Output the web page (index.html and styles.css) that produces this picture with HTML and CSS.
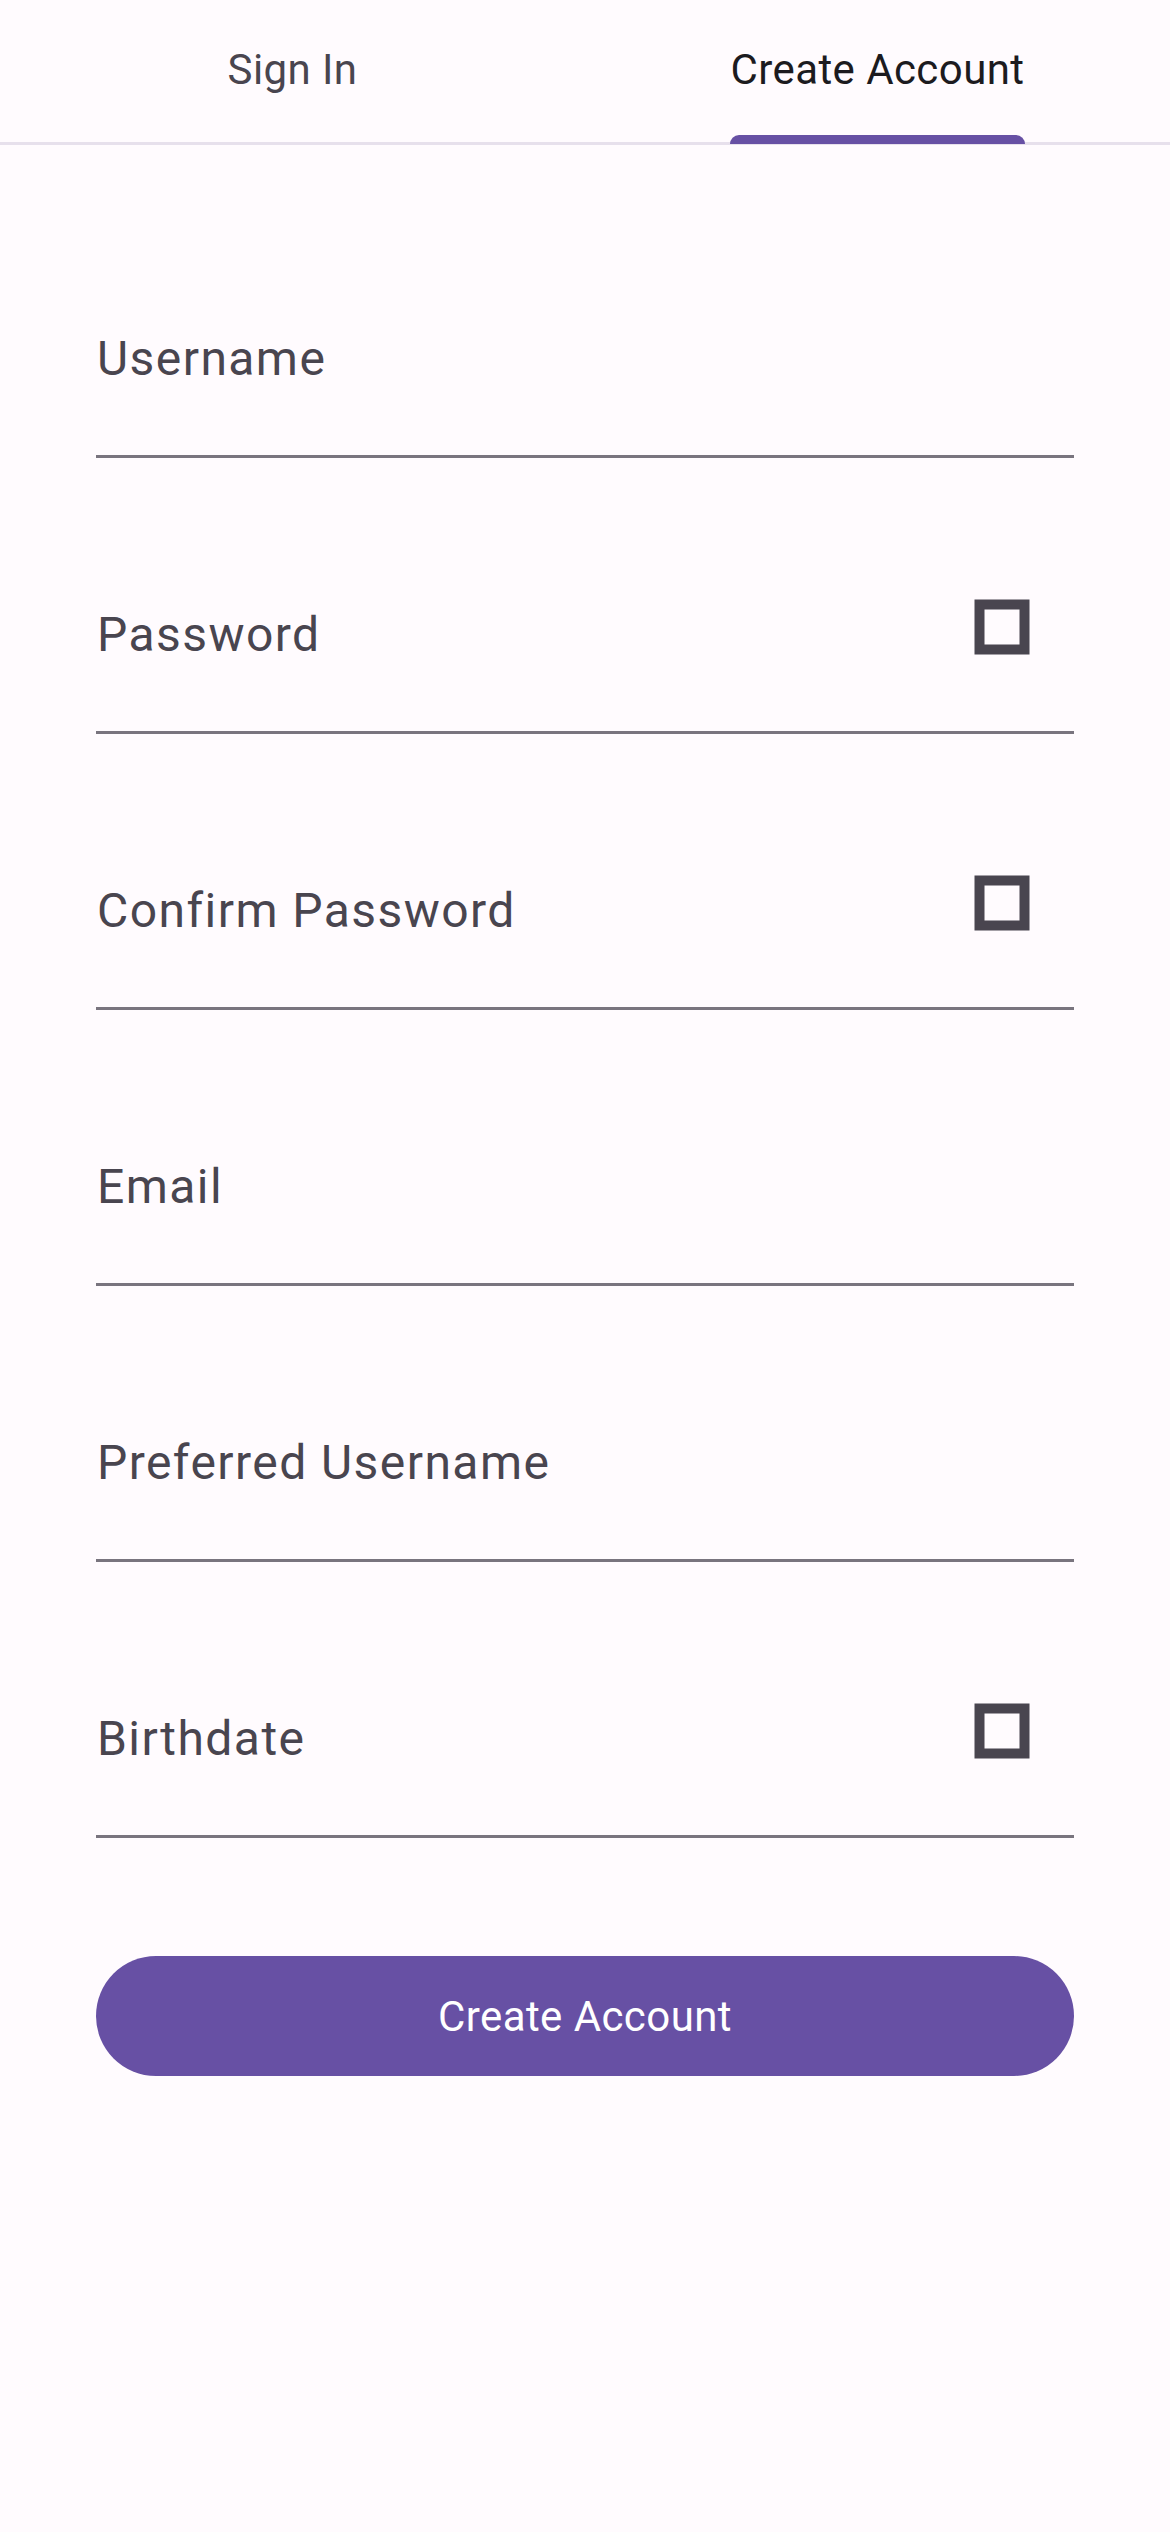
FILE: index.html
```html
<!DOCTYPE html>
<html lang="en">
<head>
<meta charset="utf-8">
<meta name="viewport" content="width=device-width">
<title>Create Account</title>
<link rel="stylesheet" href="styles.css">
</head>
<body>
<nav class="tabs" role="tablist">
  <button class="tab" type="button" role="tab" aria-selected="false"><span class="tab-label">Sign In</span></button>
  <button class="tab tab-active" type="button" role="tab" aria-selected="true"><span class="tab-label">Create Account</span></button>
</nav>
<form class="form">
  <div class="field">
    <label class="label" for="username">Username</label>
    <input class="input" id="username" type="text">
  </div>
  <div class="field">
    <label class="label" for="password">Password</label>
    <input class="input" id="password" type="password">
    <button class="toggle" type="button" aria-label="Show password"><svg class="icon" viewBox="0 0 56 56"><path d="M5.500 5.500h45v45h-45z"/></svg></button>
  </div>
  <div class="field">
    <label class="label" for="confirm">Confirm Password</label>
    <input class="input" id="confirm" type="password">
    <button class="toggle" type="button" aria-label="Show password"><svg class="icon" viewBox="0 0 56 56"><path d="M5.500 5.500h45v45h-45z"/></svg></button>
  </div>
  <div class="field">
    <label class="label" for="email">Email</label>
    <input class="input" id="email" type="email">
  </div>
  <div class="field">
    <label class="label" for="preferred">Preferred Username</label>
    <input class="input" id="preferred" type="text">
  </div>
  <div class="field">
    <label class="label" for="birthdate">Birthdate</label>
    <input class="input" id="birthdate" type="text">
    <button class="toggle" type="button" aria-label="Pick a date"><svg class="icon" viewBox="0 0 56 56"><path d="M5.500 5.500h45v45h-45z"/></svg></button>
  </div>
  <button class="submit" type="submit">Create Account</button>
</form>
</body>
</html>
```
FILE: styles.css
```css
* { box-sizing: border-box; }

body {
  margin: 0;
  min-height: 100vh;
  background: #fffbfe;
  color: #49454f;
  font-family: Roboto, sans-serif;
}

button {
  margin: 0;
  padding: 0;
  border: 0;
  background: none;
  color: inherit;
  font: inherit;
  cursor: pointer;
}

.tabs {
  display: flex;
  height: 145px;
  border-bottom: 3px solid #e7e0ec;
}

.tab {
  display: flex;
  flex: 1;
  justify-content: center;
  height: 144px;
  font-size: 42px;
  letter-spacing: 0.01em;
  line-height: 60px;
}

.tab-label {
  height: 144px;
  padding-top: 40px;
}

.tab-active { color: #1c1b1f; }

.tab-active .tab-label {
  display: flex;
  flex-direction: column;
  justify-content: space-between;
}

.tab-active .tab-label::after {
  content: "";
  height: 9px;
  border-radius: 9px 9px 0 0;
  background: #6750a4;
}

.form {
  display: flex;
  flex-direction: column;
  gap: 108px;
  padding: 145px 96px 96px;
}

.field {
  display: grid;
  grid-template-columns: 1fr 144px;
  align-items: start;
  height: 168px;
  border-bottom: 3px solid #79747e;
}

.label {
  grid-area: 1 / 1;
  padding: 33px 0 0 1px;
  font-size: 48px;
  line-height: 72px;
  letter-spacing: 0.03em;
}

.input {
  grid-area: 1 / 1 / 2 / 3;
  align-self: stretch;
  min-width: 0;
  padding: 0;
  border: 0;
  outline: 0;
  background: transparent;
  color: #1c1b1f;
  font: inherit;
  font-size: 48px;
}

.toggle {
  display: grid;
  grid-area: 1 / 2;
  place-items: center;
  height: 122px;
}

.icon {
  width: 56px;
  height: 56px;
  fill: none;
  stroke: #49454f;
  stroke-width: 10;
}

.submit {
  height: 120px;
  margin-top: 10px;
  padding-top: 2px;
  border-radius: 60px;
  background: #6750a4;
  color: #fff;
  font-size: 42px;
  letter-spacing: 0.01em;
  line-height: 60px;
}
```
